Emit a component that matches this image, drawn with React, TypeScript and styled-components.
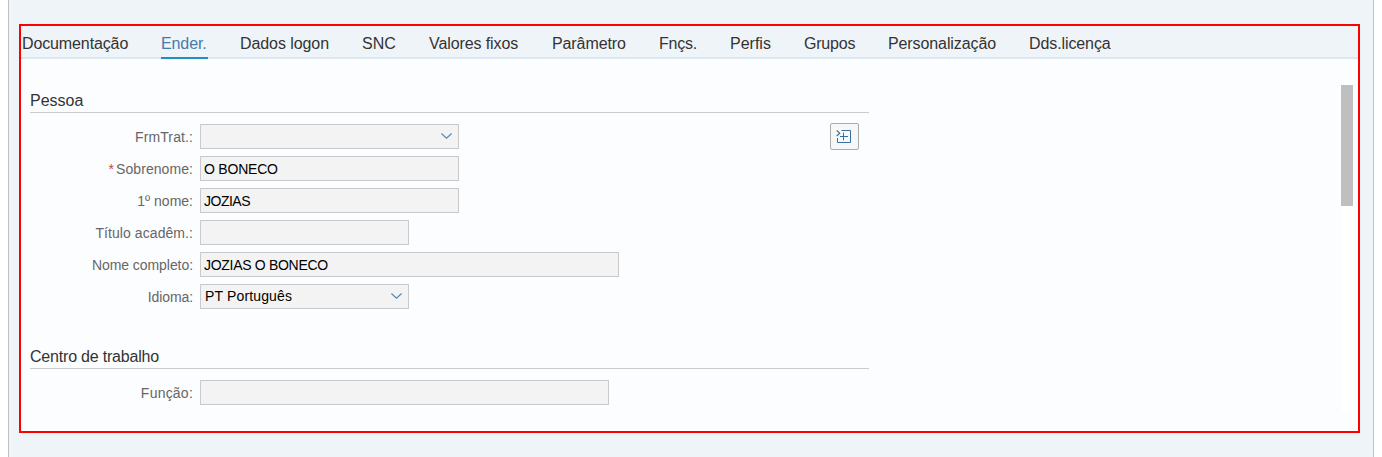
import React from "react";
import styled, { createGlobalStyle } from "styled-components";

const GlobalStyle = createGlobalStyle`
  * { box-sizing: border-box; }
  body {
    margin: 0;
    background: #fff;
    font-family: "Liberation Sans", Arial, sans-serif;
    overflow: hidden;
  }
`;

const Window = styled.main`
  width: 1366px;
  height: 457px;
  margin-left: 8px;
  padding: 24px 0 0 10px;
  background: #eff4f8;
  border: solid #bdbfc2;
  border-width: 0 1px;
`;

const Frame = styled.section`
  display: flex;
  flex-direction: column;
  width: 1341px;
  height: 409px;
  border: 2px solid #fe0000;
  background: #fcfdff;
`;

const TabBar = styled.nav`
  display: flex;
  gap: 32px;
  height: 33px;
  padding-left: 1px;
  background: #eff4f8;
  box-shadow: inset 0 -2px #dbe7f0;
`;

const Tab = styled.button<{ $width: number; $spacing: number; $active?: boolean }>`
  flex: none;
  width: ${(p) => p.$width}px;
  height: 33px;
  padding: 5px 0 0;
  border: 0;
  border-bottom: 2px solid ${(p) => (p.$active ? "#1f8fc7" : "transparent")};
  background: none;
  color: ${(p) => (p.$active ? "#427cac" : "#333")};
  font: 16px/26px "Liberation Sans", Arial, sans-serif;
  letter-spacing: ${(p) => p.$spacing}px;
  text-align: left;
  white-space: nowrap;
`;

const Content = styled.div`
  display: flex;
  justify-content: space-between;
  flex: 1;
  min-height: 0;
  padding: 26px 5px 0 9px;
`;

const Form = styled.div`
  display: flex;
  flex-direction: column;
  gap: 32px;
  width: 839px;
`;

const Group = styled.section`
  display: flex;
  flex-direction: column;
`;

const GroupTitle = styled.h2<{ $spacing: number }>`
  height: 28px;
  margin: 0 0 11px;
  padding-top: 6px;
  border-bottom: 1px solid #cacbcd;
  color: #333;
  font-size: 16px;
  font-weight: 400;
  line-height: 20px;
  letter-spacing: ${(p) => p.$spacing}px;
`;

const Row = styled.div`
  display: flex;
  align-items: flex-start;
  height: 25px;

  & + & {
    margin-top: 7px;
  }
`;

const Label = styled.label<{ $spacing?: number }>`
  width: 163px;
  margin-right: 7px;
  color: #666;
  font-size: 14px;
  line-height: 27px;
  letter-spacing: ${(p) => p.$spacing ?? 0}px;
  text-align: right;
  white-space: nowrap;
`;

const Required = styled.span`
  margin-right: 2px;
  color: #c14646;
`;

const Field = styled.div<{ $width: number; $select?: boolean }>`
  display: flex;
  align-items: center;
  justify-content: space-between;
  width: ${(p) => p.$width}px;
  height: 25px;
  padding: ${(p) => (p.$select ? "0 6px 1px 4px" : "1px 6px 0 3px")};
  border: 1px solid #c8cacc;
  background: #f3f3f3;
  color: #000;
  font-size: 14px;
  line-height: 22px;
  white-space: nowrap;
`;

const Value = styled.span<{ $spacing?: number }>`
  letter-spacing: ${(p) => p.$spacing ?? 0}px;
`;

const IconButton = styled.button`
  display: flex;
  align-items: center;
  justify-content: center;
  width: 29px;
  height: 27px;
  margin: -1px 10px 0 auto;
  padding: 0 2px 0 0;
  border: 1px solid #aaabad;
  border-radius: 2px;
  background: #f7f7f7;
`;

const ScrollTrack = styled.div`
  width: 12px;
  height: 327px;
  background: #fff;
`;

const ScrollThumb = styled.div`
  height: 121px;
  background: #bfbfbf;
`;

const Chevron = () => (
  <svg width="11" height="6" viewBox="0 0 11 6" fill="none" stroke="#4c87b6" strokeWidth="1.1">
    <path d="M.4.5 5.5 5.2 10.6.5" />
  </svg>
);

const ExpandIcon = () => (
  <svg width="15" height="13" viewBox="0 0 15 13" fill="none" stroke="#356f9f">
    <path d="M.7.5 3.8 3.2 .7 6" strokeWidth="1.1" />
    <path d="M5.5 .5H14.5V12.5H1.5V8M4 6.5H12M7.5 2.7V10.3" />
  </svg>
);

const tabs: [string, number, number][] = [
  ["Documentação", 107, -0.12],
  ["Ender.", 47, -0.1],
  ["Dados logon", 90, -0.08],
  ["SNC", 35, 0],
  ["Valores fixos", 91, -0.1],
  ["Parâmetro", 75, -0.1],
  ["Fnçs.", 39, -0.2],
  ["Perfis", 42, 0],
  ["Grupos", 52, -0.2],
  ["Personalização", 109, -0.1],
  ["Dds.licença", 83, -0.1],
];

type FormField = {
  label: string;
  labelSpacing?: number;
  width: number;
  value?: string;
  spacing?: number;
  select?: boolean;
  required?: boolean;
  action?: boolean;
};

const person: FormField[] = [
  { label: "FrmTrat.:", labelSpacing: 0.1, width: 259, select: true, action: true },
  { label: "Sobrenome:", labelSpacing: 0.07, width: 259, value: "O BONECO", spacing: -0.22, required: true },
  { label: "1º nome:", width: 259, value: "JOZIAS", spacing: -0.5 },
  { label: "Título acadêm.:", labelSpacing: 0.07, width: 209 },
  { label: "Nome completo:", labelSpacing: -0.06, width: 419, value: "JOZIAS O BONECO", spacing: -0.3 },
  { label: "Idioma:", labelSpacing: -0.1, width: 209, value: "PT Português", spacing: 0.15, select: true },
];

const work: FormField[] = [{ label: "Função:", labelSpacing: 0.22, width: 409 }];

type FormGroupProps = { title: string; titleSpacing?: number; fields: FormField[] };

const FormGroup = ({ title, titleSpacing = 0, fields }: FormGroupProps) => (
  <Group>
    <GroupTitle $spacing={titleSpacing}>{title}</GroupTitle>
    {fields.map((f) => (
      <Row key={f.label}>
        <Label $spacing={f.labelSpacing}>
          {f.required && <Required>*</Required>}
          {f.label}
        </Label>
        <Field $width={f.width} $select={f.select}>
          <Value $spacing={f.spacing}>{f.value}</Value>
          {f.select && <Chevron />}
        </Field>
        {f.action && (
          <IconButton aria-label="Expandir">
            <ExpandIcon />
          </IconButton>
        )}
      </Row>
    ))}
  </Group>
);

export default function App() {
  return (
    <>
      <GlobalStyle />
      <Window>
        <Frame>
          <TabBar>
            {tabs.map(([name, width, spacing]) => (
              <Tab key={name} $width={width} $spacing={spacing} $active={name === "Ender."}>
                {name}
              </Tab>
            ))}
          </TabBar>
          <Content>
            <Form>
              <FormGroup title="Pessoa" fields={person} />
              <FormGroup title="Centro de trabalho" titleSpacing={-0.2} fields={work} />
            </Form>
            <ScrollTrack>
              <ScrollThumb />
            </ScrollTrack>
          </Content>
        </Frame>
      </Window>
    </>
  );
}
